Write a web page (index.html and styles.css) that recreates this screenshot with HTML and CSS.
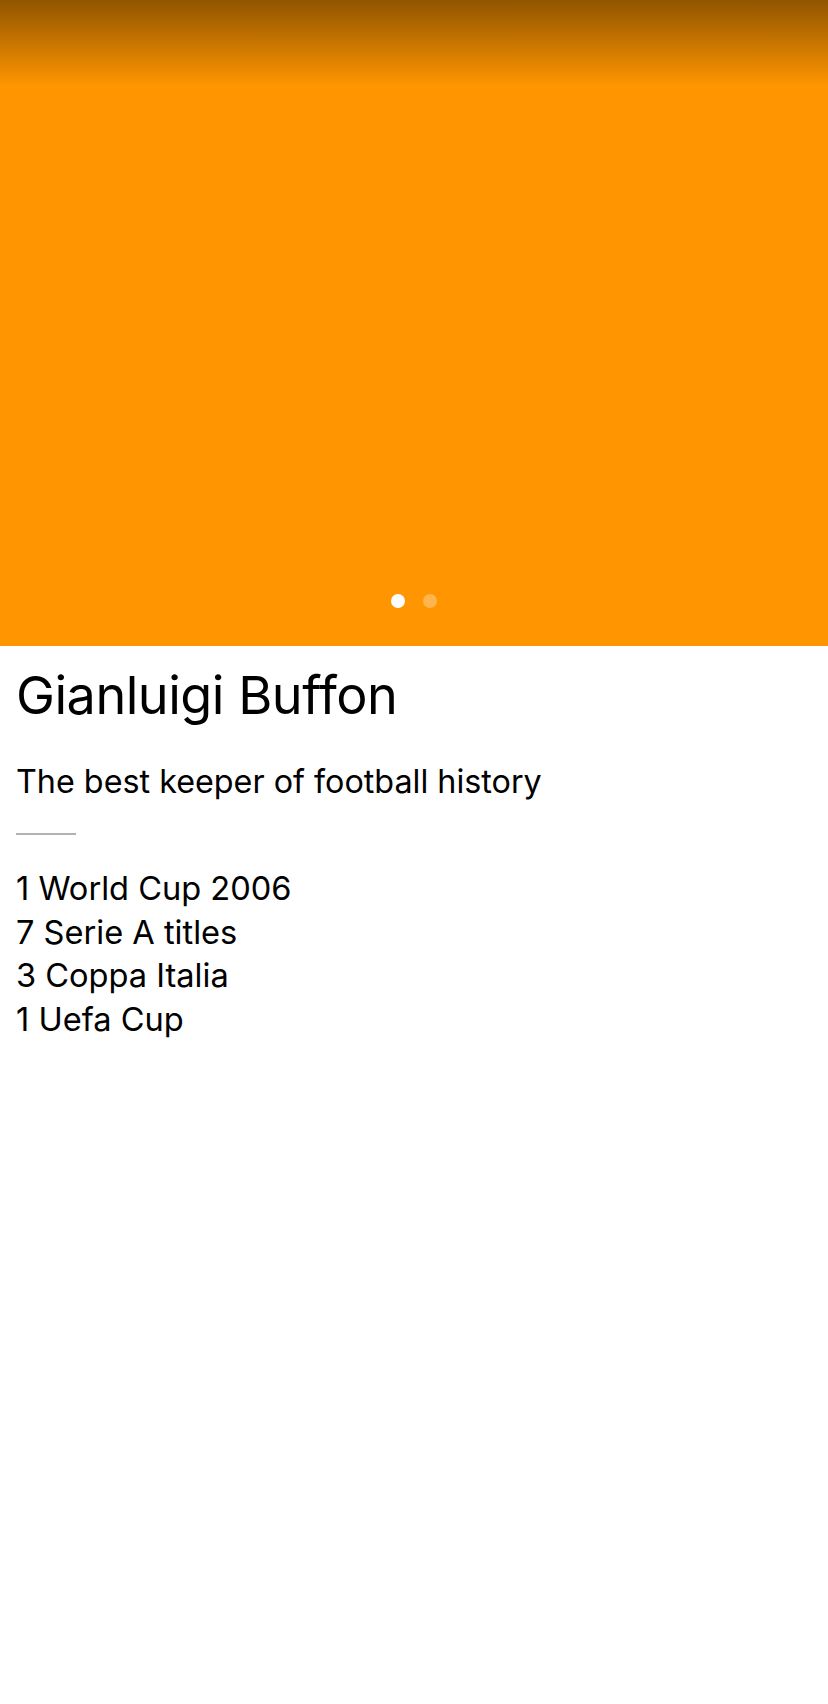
FILE: index.html
```html
<!DOCTYPE html>
<html>
<head>
<meta charset="utf-8">
<link rel="stylesheet" href="styles.css">
</head>
<body>
<div class="hero">
  <div class="hero-shade"></div>
  <div class="dots">
    <span class="dot dot-active"></span>
    <span class="dot"></span>
  </div>
</div>
<div class="content">
  <h1 class="title">Gianluigi Buffon</h1>
  <p class="subtitle">The best keeper of football history</p>
  <div class="divider"></div>
  <ul class="trophies">
    <li>1 World Cup 2006</li>
    <li>7 Serie A titles</li>
    <li>3 Coppa Italia</li>
    <li>1 Uefa Cup</li>
  </ul>
</div>
</body>
</html>
```
FILE: styles.css
```css
html, body {
  margin: 0;
  padding: 0;
  background: #ffffff;
}
body {
  width: 828px;
  height: 1704px;
  font-family: Inter, "Noto Sans", sans-serif;
  color: #000;
  overflow: hidden;
}
.hero {
  position: relative;
  height: 646px;
  background: #ff9500;
  display: flex;
  flex-direction: column;
  justify-content: space-between;
}
.hero-shade {
  height: 86px;
  background: linear-gradient(to bottom, rgba(0,0,0,0.43), rgba(0,0,0,0));
}
.dots {
  display: flex;
  justify-content: center;
  gap: 18px;
  padding-bottom: 38px;
}
.dot {
  width: 14px;
  height: 14px;
  border-radius: 50%;
  background: rgba(255,255,255,0.3);
}
.dot-active {
  background: #ffffff;
}
.content {
  padding: 0 16px;
}
.title {
  margin: 0;
  padding-top: 16px;
  font-size: 52.2px;
  font-weight: 400;
  line-height: 66px;
  letter-spacing: -0.5px;
}
.subtitle {
  margin: 0;
  padding-top: 34px;
  font-size: 32.3px;
  line-height: 40px;
}
.divider {
  margin-top: 31px;
  width: 60px;
  height: 2px;
  background: #b3b3b3;
}
.trophies {
  list-style: none;
  margin: 0;
  padding: 32px 0 0;
  font-size: 32.6px;
  line-height: 43.5px;
}
```
